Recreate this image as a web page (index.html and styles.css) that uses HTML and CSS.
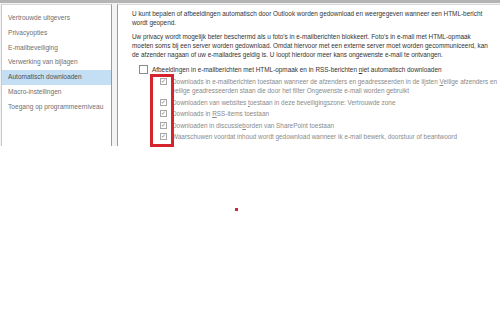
FILE: index.html
```html
<!DOCTYPE html>
<html>
<head>
	<title>Automatisch downloaden</title>
	<link rel="stylesheet" href="styles.css">
</head>
<body>
	<div class="window">
		<div class="topbar"></div>
		<div class="panes">
			<ul class="sidebar">
				<li>Vertrouwde uitgevers</li>
				<li>Privacyopties</li>
				<li>E-mailbeveiliging</li>
				<li>Verwerking van bijlagen</li>
				<li class="selected">Automatisch downloaden</li>
				<li>Macro-instellingen</li>
				<li>Toegang op programmeerniveau</li>
			</ul>

			<div class="content">
				<p class="intro">U kunt bepalen of afbeeldingen automatisch door Outlook worden gedownload en weergegeven wanneer een HTML-bericht<br>wordt geopend.</p>
				<p class="intro">Uw privacy wordt mogelijk beter beschermd als u foto's in e-mailberichten blokkeert. Foto's in e-mail met HTML-opmaak<br>moeten soms bij een server worden gedownload. Omdat hiervoor met een externe server moet worden gecommuniceerd, kan<br>de afzender nagaan of uw e-mailadres geldig is. U loopt hierdoor meer kans ongewenste e-mail te ontvangen.</p>

				<div class="main-option">
					<span class="box"></span>
					<span>Afbeeldingen in e-mailberichten met HTML-opmaak en in RSS-berichten <u>n</u>iet automatisch downloaden</span>
				</div>

				<div class="sub-options">
					<div class="sub-option">
						<span class="box checked">&#10003;</span>
						<span>Downloads in e-mailberichten toestaan wanneer de afzenders en geadresseerden in de lijsten <u>V</u>eilige afzenders en<br>veilige geadresseerden staan die door het filter Ongewenste e-mail worden gebruikt</span>
					</div>
					<div class="sub-option">
						<span class="box checked">&#10003;</span>
						<span>Downloaden van websites <u>t</u>oestaan in deze beveiligingszone: Vertrouwde zone</span>
					</div>
					<div class="sub-option">
						<span class="box checked">&#10003;</span>
						<span>Downloads in <u>R</u>SS-items toestaan</span>
					</div>
					<div class="sub-option">
						<span class="box checked">&#10003;</span>
						<span>Downloaden in discussie<u>b</u>orden van SharePoint toestaan</span>
					</div>
					<div class="sub-option">
						<span class="box checked">&#10003;</span>
						<span>Waarschuwen voordat inhoud wordt gedownload wanneer ik e-mail bewerk, doorstuur of beantwoord</span>
					</div>
					<div class="highlight"></div>
				</div>
			</div>
		</div>
		<div class="dot"></div>
	</div>
</body>
</html>
```

FILE: styles.css
```css
body {
	margin: 0;
	background-color: #fff;
	font-family: "Liberation Sans", Arial, sans-serif;
	font-size: 6.6px;
	color: #444;
}

.window {
	position: relative;
	width: 500px;
	height: 318px;
	overflow: hidden;
}

.topbar {
	height: 3px;
	background-color: #b4b4b4;
}

.panes {
	display: flex;
	height: 142px;
	background-color: #f3f3f3;
	padding-top: 1px;
}

.sidebar {
	flex: none;
	list-style: none;
	margin: 0 0 0 1px;
	padding: 6px 0 0 0;
	width: 109px;
	background-color: #fff;
	border-left: 1px solid #c8c8c8;
	border-right: 1px solid #9a9a9a;
	border-top: 1px solid #d8d8d8;
}

.sidebar li {
	height: 14.8px;
	line-height: 14.8px;
	padding-left: 6px;
	color: #707070;
	white-space: nowrap;
}

.sidebar li.selected {
	background-color: #c4dff3;
	color: #505050;
}

.content {
	position: relative;
	flex: 1;
	min-width: 0;
	margin-left: 5px;
	padding: 4px 0 0 14px;
	background-color: #fff;
	border-left: 1px solid #9a9a9a;
	border-top: 1px solid #d8d8d8;
	white-space: nowrap;
	font-size: 6.4px;
}

.intro {
	margin: 0 0 5px 0;
	line-height: 9px;
	color: #333;
}

.main-option {
	display: flex;
	align-items: center;
	gap: 4px;
	margin: 0 0 0 7px;
	height: 10px;
	color: #333;
}

.main-option .box {
	width: 7px;
	height: 7px;
	border: 1px solid #8a8a8a;
	background-color: #fff;
}

.sub-options {
	position: relative;
	margin: 3px 0 0 28px;
}

.sub-option {
	display: flex;
	align-items: flex-start;
	gap: 5px;
	margin-bottom: 2.5px;
	line-height: 9px;
	color: #8a8a8a;
}

.sub-option .box {
	flex: none;
	width: 5px;
	height: 5px;
	margin-top: 1px;
	border: 1px solid #a8a8a8;
	font-size: 6px;
	line-height: 5px;
	text-align: center;
	color: #777;
}

.highlight {
	position: absolute;
	left: -10px;
	top: -3px;
	width: 18px;
	height: 67px;
	border: 3px solid #d6242e;
}

.dot {
	position: absolute;
	left: 235px;
	top: 208px;
	width: 3px;
	height: 3px;
	background-color: #d02a3a;
}
```
